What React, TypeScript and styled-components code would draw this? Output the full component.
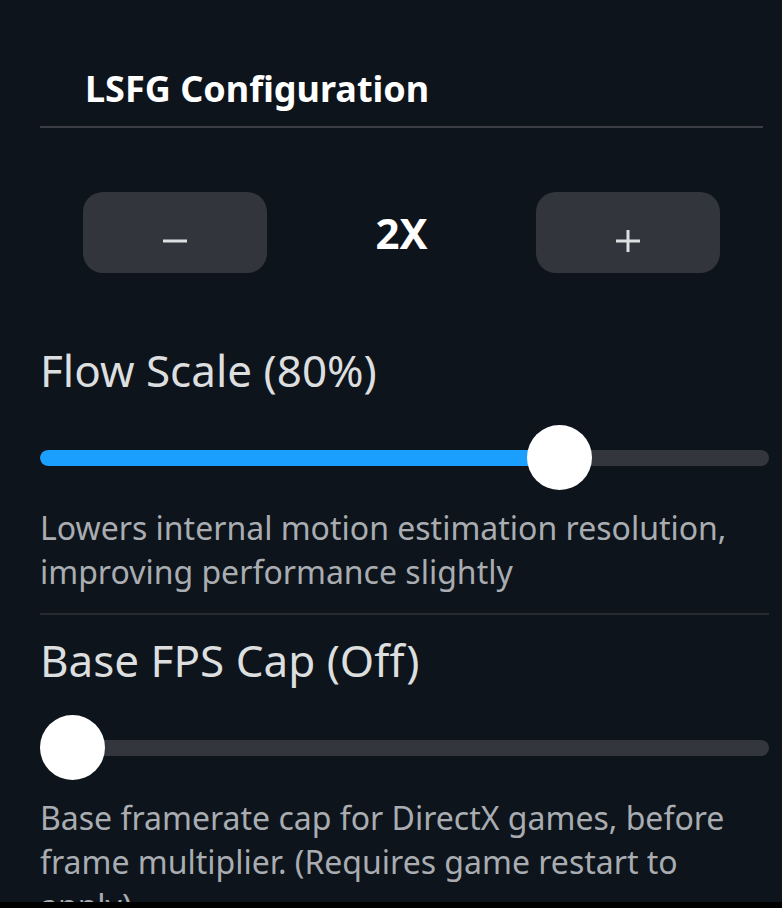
import React from "react";
import styled, { createGlobalStyle } from "styled-components";

const GlobalStyle = createGlobalStyle`
  html, body {
    margin: 0;
    padding: 0;
    background: #000000;
  }
  body {
    font-family: "Noto Sans", "Open Sans", sans-serif;
  }
  * { box-sizing: border-box; }
`;

const Viewport = styled.div`
  width: 782px;
  height: 902px;
  overflow: hidden;
  background: #0e141b;
`;

const Panel = styled.div`
  display: flex;
  flex-direction: column;
  padding: 65px 13px 0 40px;
`;

const Header = styled.div`
  display: flex;
  flex-direction: column;
  margin-right: 6px;
`;

const Title = styled.h2`
  margin: 0;
  padding-left: 45px;
  font-size: 36px;
  font-weight: 700;
  color: #ffffff;
  line-height: 48px;
`;

const Divider = styled.div<{ $tone: "strong" | "soft"; $gap: number }>`
  height: 2px;
  margin-top: ${(p) => p.$gap}px;
  background: ${(p) => (p.$tone === "strong" ? "#3b3f45" : "#262b31")};
`;

const Stepper = styled.div`
  display: flex;
  align-items: center;
  justify-content: space-between;
  margin-top: 64px;
  padding: 0 49px 0 43px;
`;

const StepButton = styled.button`
  width: 184px;
  height: 81px;
  border: none;
  border-radius: 20px;
  background: #32363c;
  color: #dcdedf;
  padding: 17px 0 0;
  display: flex;
  align-items: center;
  justify-content: center;
`;

const StepValue = styled.div`
  font-size: 42px;
  font-weight: 700;
  color: #ffffff;
  line-height: 1;
`;

const Field = styled.div<{ $top: number }>`
  display: flex;
  flex-direction: column;
  margin-top: ${(p) => p.$top}px;
`;

const Label = styled.div`
  font-size: 44px;
  color: #dcdedf;
  line-height: normal;
`;

const SliderRoot = styled.div`
  position: relative;
  height: 65px;
  margin-top: 25px;
  display: flex;
  align-items: center;
`;

const Track = styled.div`
  position: relative;
  width: 100%;
  height: 16px;
  border-radius: 8px;
  background: #33373d;
  overflow: hidden;
`;

const Fill = styled.div`
  height: 100%;
  background: #1a9fff;
  border-radius: 8px 0 0 8px;
`;

const Thumb = styled.div`
  position: absolute;
  top: 0;
  width: 65px;
  height: 65px;
  border-radius: 50%;
  background: #ffffff;
`;

const Description = styled.div`
  margin-top: 16px;
  font-size: 32px;
  line-height: 44px;
  color: #a9adb1;
  padding-right: 20px;
`;

const THUMB = 65;
const WIDTH = 729;

function Slider({ fraction }: { fraction: number }) {
  const center = THUMB / 2 + fraction * (WIDTH - THUMB);
  return (
    <SliderRoot>
      <Track>
        <Fill style={{ width: fraction > 0 ? `${center}px` : "0px" }} />
      </Track>
      <Thumb style={{ left: `${center - THUMB / 2}px` }} />
    </SliderRoot>
  );
}

function MinusIcon() {
  return (
    <svg width="24" height="22" viewBox="0 0 24 22" aria-label="minus">
      <rect x="0" y="9.5" width="24" height="3" fill="#dcdedf" />
    </svg>
  );
}

function PlusIcon() {
  return (
    <svg width="24" height="22" viewBox="0 0 24 22" aria-label="plus">
      <rect x="0" y="9.5" width="24" height="3" fill="#dcdedf" />
      <rect x="10.5" y="0" width="3" height="22" fill="#dcdedf" />
    </svg>
  );
}

export default function App() {
  return (
    <>
      <GlobalStyle />
      <Viewport>
        <Panel>
          <Header>
            <Title>LSFG Configuration</Title>
            <Divider $tone="strong" $gap={13} />
          </Header>
          <Stepper>
            <StepButton>
              <MinusIcon />
            </StepButton>
            <StepValue>2X</StepValue>
            <StepButton>
              <PlusIcon />
            </StepButton>
          </Stepper>
          <Field $top={67}>
            <Label>Flow Scale (80%)</Label>
            <Slider fraction={(80 - 25) / 75} />
            <Description>
              Lowers internal motion estimation resolution, improving performance slightly
            </Description>
          </Field>
          <Divider $tone="soft" $gap={19} />
          <Field $top={15}>
            <Label>Base FPS Cap (Off)</Label>
            <Slider fraction={0} />
            <Description>
              Base framerate cap for DirectX games, before frame multiplier. (Requires game restart to apply)
            </Description>
          </Field>
        </Panel>
      </Viewport>
    </>
  );
}
